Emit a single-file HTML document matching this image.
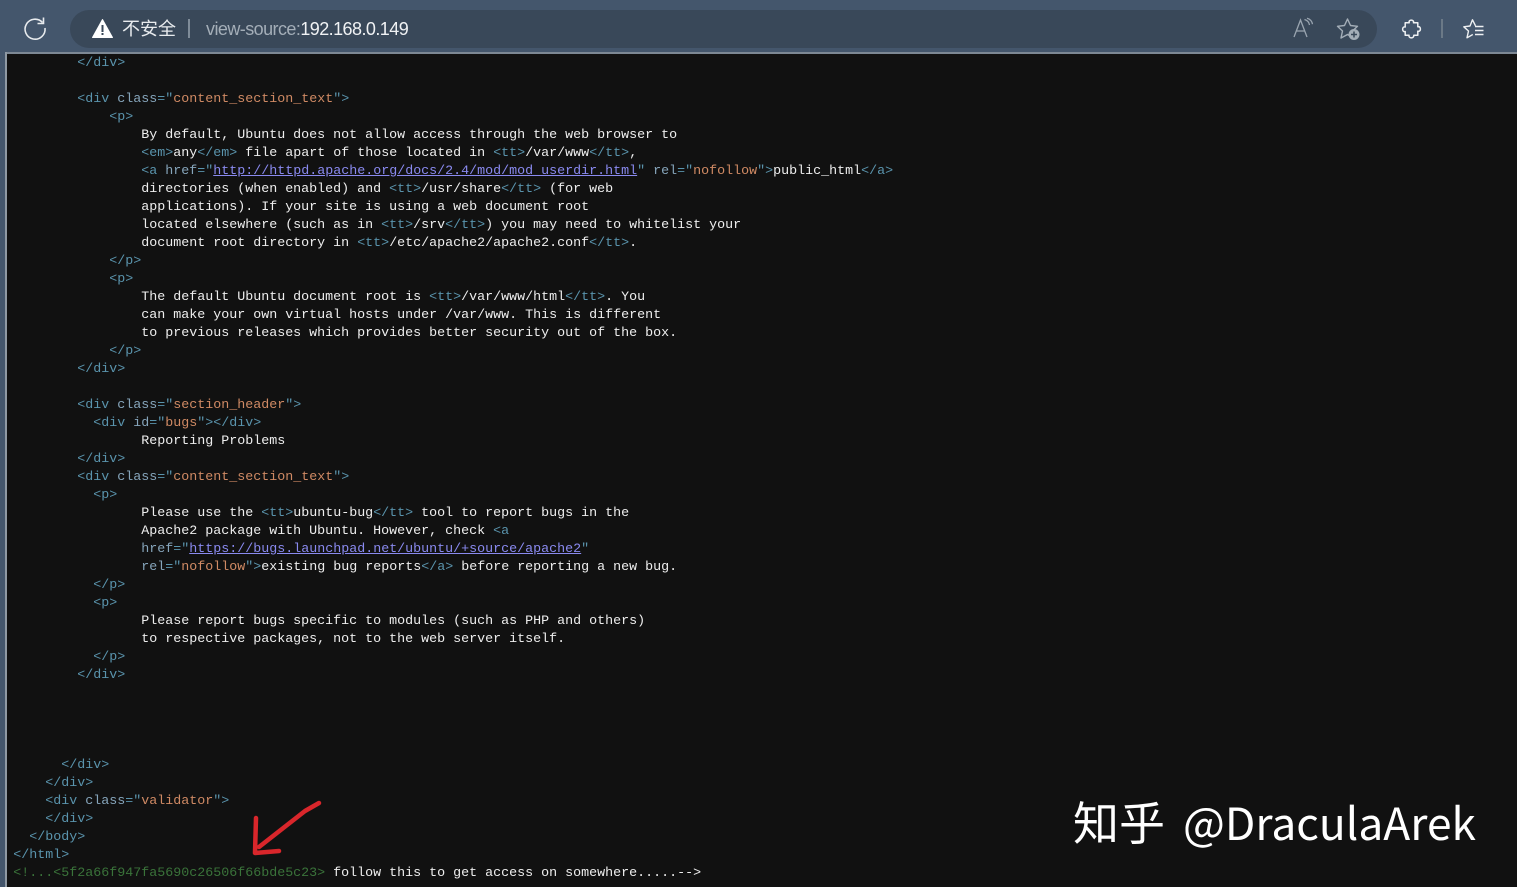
<!DOCTYPE html>
<html lang="zh">
<head>
<meta charset="utf-8">
<title>view-source:192.168.0.149</title>
<style>
html,body{margin:0;padding:0;background:#111;width:1517px;height:887px;overflow:hidden}
#bar{position:absolute;left:0;top:0;width:1517px;height:52px;background:#44566c}
#sep{position:absolute;left:0;top:52px;width:1517px;height:2px;background:#7d8894}
#side{position:absolute;left:0;top:52px;width:5px;height:835px;background:#44566c}
#sideb{position:absolute;left:5px;top:52px;width:2px;height:835px;background:#8f99a3}
#pill{position:absolute;left:70px;top:10px;width:1307px;height:38px;border-radius:19px;background:#394859}
.t{position:absolute;white-space:pre;font-family:"Liberation Sans","Noto Sans CJK SC",sans-serif;color:#fff}
#clip{position:absolute;left:7px;top:54px;width:1510px;height:833px;overflow:hidden}
#src{position:absolute;left:6.250px;top:1px;margin:0;font:13.333px/18px "Liberation Mono",monospace;color:#eee;white-space:pre}
#src i{font-style:normal;color:#5a94ad}
#src b{font-weight:normal;color:#86a5bb}
#src u{text-decoration:none;color:#d08a64}
#src s{color:#8a8af0;text-decoration:underline}
#src em{font-style:normal;color:#3a733a}
.wm{position:absolute;font-family:"Noto Sans CJK SC",sans-serif;color:#fff;white-space:pre;line-height:68px}
svg{position:absolute;overflow:visible}
</style>
</head>
<body>
<div id="bar"></div>
<div id="sep"></div>
<div id="side"></div>
<div id="sideb"></div>
<div id="pill"></div>

<svg style="left:24px;top:17px" width="22" height="22" viewBox="0 0 22 22" fill="none" stroke="#e8ebee" stroke-width="1.600">
<path d="M18.500 5.500A10 10 0 1 0 21 11"/><path d="M19.500 0.500V6.500H13.500"/>
</svg>
<svg style="left:92px;top:19px" width="21" height="19" viewBox="0 0 21 19">
<path d="M10.500 0.500 20.500 18.500H0.500Z" fill="#fff" stroke="#fff" stroke-linejoin="round"/>
<rect x="9.500" y="6" width="2" height="7" fill="#394859"/><rect x="9.500" y="14" width="2" height="2" fill="#394859"/>
</svg>
<div class="t" style="left:122px;top:17px;font-size:18px;line-height:24px;color:#e8ebee">不安全</div>
<div style="position:absolute;left:188px;top:19px;width:2px;height:19px;background:#7f8c99"></div>
<div class="t" style="left:206px;top:17px;font-size:18px;line-height:24px;letter-spacing:-.56px;color:#a4aeb8">view-source:<span style="color:#f0f2f4">192.168.0.149</span></div>

<svg style="left:1293px;top:18px" width="20" height="20" viewBox="0 0 20 20" fill="none" stroke="#9aa5b0" stroke-width="1.300">
<path d="M1 19 7.500 2 14 19M3.500 13h8"/><path d="M11.500 1.500c3 .8 4.500 2.500 5 5.500M14 .2c3 .8 5 3 5.500 6"/>
</svg>
<svg style="left:1337px;top:18px" width="24" height="23" viewBox="0 0 24 23" fill="none" stroke="#a4aeb8" stroke-width="1.400">
<path d="M10.500 1 13.500 7.500 20.500 8.300 15.500 13 17 20 10.500 16.500 4 20 5.500 13 .5 8.300 7.500 7.500Z" stroke-linejoin="round"/>
<circle cx="17" cy="16.500" r="5.500" fill="#a4aeb8" stroke="none"/>
<path d="M17 13.500v6M14 16.500h6" stroke="#394859" stroke-width="1.500"/>
</svg>
<svg style="left:1402px;top:19px" width="20" height="20" viewBox="0 0 20 20" fill="none" stroke="#eef0f2" stroke-width="1.500" stroke-linejoin="round">
<path d="M7.200 3.800C6 .3 12.500 .3 11.500 3.800H15.800V7.800C19.300 6.800 19.300 13.200 15.800 12.200V16.200H11.800C12.300 19.700 6.300 19.700 7 16.200H3.200V12.500C-.2 13.500 -.2 7 3.200 8V3.800Z"/>
</svg>
<div style="position:absolute;left:1441px;top:19px;width:2px;height:19px;background:#6b7987"></div>
<svg style="left:1463px;top:19px" width="21" height="20" viewBox="0 0 21 20" fill="none" stroke="#eef0f2" stroke-width="1.400" stroke-linejoin="round">
<path d="M12.500 6.800 9.500 .8 7 7 .8 7.800 5.500 12 4 18.800 9.800 15.500"/><path d="M12 7.500H20.500M12 11.500H20.500M12 15.500H20.500"/>
</svg>

<div id="clip"><pre id="src">        <i>&lt;/div&gt;</i>

        <i>&lt;div</i> <b>class</b><i>="</i><u>content_section_text</u><i>"&gt;</i>
            <i>&lt;p&gt;</i>
                By default, Ubuntu does not allow access through the web browser to
                <i>&lt;em&gt;</i>any<i>&lt;/em&gt;</i> file apart of those located in <i>&lt;tt&gt;</i>/var/www<i>&lt;/tt&gt;</i>,
                <i>&lt;a</i> <b>href</b><i>="</i><s>http://httpd.apache.org/docs/2.4/mod/mod_userdir.html</s><i>"</i> <b>rel</b><i>="</i><u>nofollow</u><i>"&gt;</i>public_html<i>&lt;/a&gt;</i>
                directories (when enabled) and <i>&lt;tt&gt;</i>/usr/share<i>&lt;/tt&gt;</i> (for web
                applications). If your site is using a web document root
                located elsewhere (such as in <i>&lt;tt&gt;</i>/srv<i>&lt;/tt&gt;</i>) you may need to whitelist your
                document root directory in <i>&lt;tt&gt;</i>/etc/apache2/apache2.conf<i>&lt;/tt&gt;</i>.
            <i>&lt;/p&gt;</i>
            <i>&lt;p&gt;</i>
                The default Ubuntu document root is <i>&lt;tt&gt;</i>/var/www/html<i>&lt;/tt&gt;</i>. You
                can make your own virtual hosts under /var/www. This is different
                to previous releases which provides better security out of the box.
            <i>&lt;/p&gt;</i>
        <i>&lt;/div&gt;</i>

        <i>&lt;div</i> <b>class</b><i>="</i><u>section_header</u><i>"&gt;</i>
          <i>&lt;div</i> <b>id</b><i>="</i><u>bugs</u><i>"&gt;&lt;/div&gt;</i>
                Reporting Problems
        <i>&lt;/div&gt;</i>
        <i>&lt;div</i> <b>class</b><i>="</i><u>content_section_text</u><i>"&gt;</i>
          <i>&lt;p&gt;</i>
                Please use the <i>&lt;tt&gt;</i>ubuntu-bug<i>&lt;/tt&gt;</i> tool to report bugs in the
                Apache2 package with Ubuntu. However, check <i>&lt;a</i>
                <b>href</b><i>="</i><s>https://bugs.launchpad.net/ubuntu/+source/apache2</s><i>"</i>
                <b>rel</b><i>="</i><u>nofollow</u><i>"&gt;</i>existing bug reports<i>&lt;/a&gt;</i> before reporting a new bug.
          <i>&lt;/p&gt;</i>
          <i>&lt;p&gt;</i>
                Please report bugs specific to modules (such as PHP and others)
                to respective packages, not to the web server itself.
          <i>&lt;/p&gt;</i>
        <i>&lt;/div&gt;</i>




      <i>&lt;/div&gt;</i>
    <i>&lt;/div&gt;</i>
    <i>&lt;div</i> <b>class</b><i>="</i><u>validator</u><i>"&gt;</i>
    <i>&lt;/div&gt;</i>
  <i>&lt;/body&gt;</i>
<i>&lt;/html&gt;</i>
<em>&lt;!...&lt;5f2a66f947fa5690c26506f66bde5c23&gt;</em> follow this to get access on somewhere.....--&gt;</pre></div>

<div class="wm" style="left:1073px;top:787px;font-size:46px">知乎</div>
<div class="wm" style="left:1183px;top:787px;font-size:44.300px">@DraculaArek</div>

<svg style="left:0;top:0" width="1517" height="887" fill="none" stroke="#d9262b" stroke-width="4.500" stroke-linecap="round" stroke-linejoin="round">
<path d="M319 803 305 811 259 847"/><path d="M256 818 255 853 279 851"/>
</svg>
</body>
</html>
